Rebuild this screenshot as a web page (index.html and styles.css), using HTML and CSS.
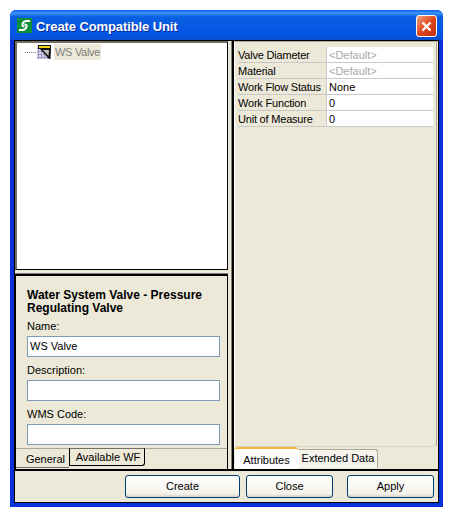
FILE: index.html
```html
<!DOCTYPE html>
<html>
<head>
<meta charset="utf-8">
<title>Create Compatible Unit</title>
<link rel="stylesheet" href="styles.css">
</head>
<body>
<div class="window">
  <div class="titlebar">
    <svg class="app-icon" width="15" height="15" viewBox="0 0 15 15">
      <rect width="15" height="15" fill="#0f8f3c"/>
      <path d="M13 3H9.500C7 3 6 4.500 5.500 6C5 8 6 8.500 7.500 8.500" fill="none" stroke="#fff" stroke-width="2"/>
      <path d="M2 12H5.500C8 12 9 10.500 9.500 9C10 7 9 6.500 7.500 6.500" fill="none" stroke="#fff" stroke-width="2"/>
    </svg>
    <span class="title-text">Create Compatible Unit</span>
    <div class="close-btn">
      <svg width="11" height="11" viewBox="0 0 11 11"><path d="M1.500 1.500L9.500 9.500M9.500 1.500L1.500 9.500" stroke="#fff" stroke-width="2.400"/></svg>
    </div>
  </div>
  <div class="client">
    <div class="panes">
      <div class="left">
        <div class="tree">
          <div class="tree-row">
            <span class="tree-dots"></span>
            <svg class="tree-icon" width="16" height="16" viewBox="0 0 16 16">
              <rect x="1" y="2" width="13" height="13" fill="#d8d8ec"/>
              <path d="M1 4.500H14M1 7.500H14M1 10.500H14M1 13.500H14M2.500 2V15M5.500 2V15M8.500 2V15M11.500 2V15" stroke="#9c9cc8" stroke-width="1"/>
              <path d="M2 1H15V5L14.500 15H13L4 5H2Z" fill="#111"/>
              <rect x="3" y="2" width="11" height="2" fill="#f2d21b"/>
              <path d="M7 6H13L12.500 12Z" fill="#c4c4c4"/>
            </svg>
            <span class="tree-label">WS Valve</span>
          </div>
        </div>
        <div class="details">
          <div class="details-body">
            <div class="heading">Water System Valve - Pressure Regulating Valve</div>
            <label class="field-label">Name:</label>
            <div class="field">WS Valve</div>
            <label class="field-label">Description:</label>
            <div class="field"></div>
            <label class="field-label">WMS Code:</label>
            <div class="field"></div>
          </div>
          <div class="tabs-left">
            <div class="ltab ltab-on">General</div>
            <div class="ltab ltab-off">Available WF</div>
          </div>
        </div>
      </div>
      <div class="right">
        <div class="props">
          <div class="prop-grid">
            <div class="prop-name">Valve Diameter</div><div class="prop-val muted">&lt;Default&gt;</div>
            <div class="prop-name">Material</div><div class="prop-val muted">&lt;Default&gt;</div>
            <div class="prop-name">Work Flow Status</div><div class="prop-val">None</div>
            <div class="prop-name">Work Function</div><div class="prop-val">0</div>
            <div class="prop-name">Unit of Measure</div><div class="prop-val">0</div>
          </div>
        </div>
        <div class="tabs-right">
          <div class="rtab rtab-on">Attributes</div>
          <div class="rtab rtab-off">Extended Data</div>
        </div>
      </div>
    </div>
    <div class="buttons">
      <div class="btn btn-create">Create</div>
      <div class="btn btn-close">Close</div>
      <div class="btn btn-apply">Apply</div>
    </div>
  </div>
</div>
</body>
</html>
```
FILE: styles.css
```css
/* Create Compatible Unit dialog */

body
{ margin: 0;
padding: 10px;
background: #fff;
font-family: "Liberation Sans", sans-serif;
font-size: 11px;
color: #000;
}

.window
{ width: 433px;
height: 497px;
box-sizing: border-box;
display: flex;
flex-direction: column;
padding: 0 4px 4px;
background: #0831d9;
border-radius: 6px 6px 0 0;
}

.titlebar
{ height: 30px;
margin: 0 -4px;
padding: 0 6px 0 7px;
flex: none;
display: flex;
align-items: center;
border-radius: 6px 6px 0 0;
background: linear-gradient(#0a5fe8 0, #3a93ff 3px, #0a5fe0 7px, #0355e6 24px, #0a4fd0 30px);
}

.app-icon
{ margin-right: 4px;
}

.title-text
{ flex: 1;
margin-top: 2px;
color: #fff;
font: bold 13px "Liberation Sans", sans-serif;
letter-spacing: -0.1px;
text-shadow: 1px 1px 0 #03289c;
}

.close-btn
{ width: 19px;
height: 20px;
margin-top: 2px;
display: flex;
align-items: center;
justify-content: center;
border: 1px solid #fff;
border-radius: 3px;
background: linear-gradient(135deg, #f0a080, #e0481e 50%, #c03010);
}

.client
{ flex: 1;
min-height: 0;
display: flex;
flex-direction: column;
background: #ece9d8;
border: 1px solid #000;
}

.panes
{ height: 430px;
flex: none;
box-sizing: border-box;
display: flex;
border-bottom: 2px solid #000;
}

.left
{ width: 213px;
flex: none;
display: flex;
flex-direction: column;
}

.tree
{ height: 229px;
flex: none;
box-sizing: border-box;
background: #fff;
border: 1px solid #000;
border-top: 2px solid #716f64;
border-left: 2px solid #716f64;
}

.tree-row
{ height: 16px;
margin-top: 1px;
display: flex;
align-items: center;
padding-left: 8px;
}

.tree-dots
{ width: 11px;
border-top: 1px dotted #808080;
}

.tree-icon
{ margin-right: 2px;
}

.tree-label
{ padding: 0 1px;
line-height: 16px;
background: #ece9d8;
color: #808080;
letter-spacing: -0.3px;
}

.details
{ flex: 1;
min-height: 0;
margin-top: 4px;
display: flex;
flex-direction: column;
border: 1px solid #000;
border-top: 2px solid #000;
border-bottom: 0;
box-shadow: 0 -1px 0 #808080;
}

.details-body
{ flex: 1;
padding: 13px 7px 0 11px;
}

.heading
{ font: bold 12px/13px "Liberation Sans", sans-serif;
margin-bottom: 4px;
}

.field-label
{ display: block;
height: 14px;
line-height: 14px;
}

.field
{ height: 21px;
box-sizing: border-box;
margin: 3px 0 6px;
padding-left: 2px;
line-height: 19px;
background: #fff;
border: 1px solid #7f9db9;
}

.field:last-child
{ margin-bottom: 0;
}

.tabs-left
{ height: 20px;
flex: none;
display: flex;
align-items: flex-start;
border-top: 1px solid #aca899;
}

.ltab
{ box-sizing: border-box;
text-align: center;
}

.ltab-on
{ width: 53px;
height: 19px;
padding-left: 6px;
line-height: 20px;
border-bottom: 1px solid #716f64;
}

.ltab-off
{ width: 76px;
height: 18px;
padding-left: 2px;
line-height: 16px;
margin-top: -1px;
border: 1px solid #000;
border-top-color: #716f64;
border-radius: 0 0 3px 0;
}

.right
{ flex: 1;
min-width: 0;
margin-left: 4px;
display: flex;
flex-direction: column;
border-left: 2px solid #000;
box-shadow: -1px 0 0 #808080;
}

.props
{ flex: 1;
min-height: 0;
margin: 0 1px 0 0;
padding: 5px 3px 0 3px;
border: 1px solid #fff;
border-color: #aca899 #aca899 #d8d4c4 #fff;
border-radius: 0 0 3px 3px;
}

.prop-grid
{ display: grid;
grid-template-columns: 89px 1fr;
}

.prop-name, .prop-val
{ height: 16px;
box-sizing: border-box;
line-height: 16px;
padding-left: 2px;
border-bottom: 1px solid #c8c8c8;
}

.prop-name
{ padding-left: 0;
border-right: 1px solid #c8c8c8;
white-space: nowrap;
letter-spacing: -0.2px;
}

.prop-val
{ background: #fff;
}

.muted
{ color: #a8a8a8;
}

.tabs-right
{ height: 22px;
flex: none;
display: flex;
align-items: flex-start;
}

.rtab
{ box-sizing: border-box;
text-align: center;
}

.rtab-on
{ width: 63px;
height: 22px;
line-height: 23px;
margin-left: 1px;
background: #fff;
border-top: 2px solid #f5b83d;
border-radius: 3px 3px 0 0;
}

.rtab-off
{ width: 80px;
height: 19px;
line-height: 17px;
margin-top: 2px;
background: #f4f3ec;
border: 1px solid #aca899;
border-left-color: #fff;
border-bottom: 0;
border-radius: 0 3px 0 0;
}

.buttons
{ flex: 1;
display: flex;
align-items: flex-start;
padding: 4px 0 0 110px;
box-sizing: border-box;
}

.btn
{ height: 23px;
box-sizing: border-box;
line-height: 21px;
text-align: center;
border: 1px solid #003c74;
border-radius: 3px;
background: linear-gradient(#fff, #f4f2ea 85%, #d6d0c5);
}

.btn-create
{ width: 115px;
margin-right: 6px;
}

.btn-close
{ width: 87px;
margin-right: 14px;
}

.btn-apply
{ width: 87px;
}
```
